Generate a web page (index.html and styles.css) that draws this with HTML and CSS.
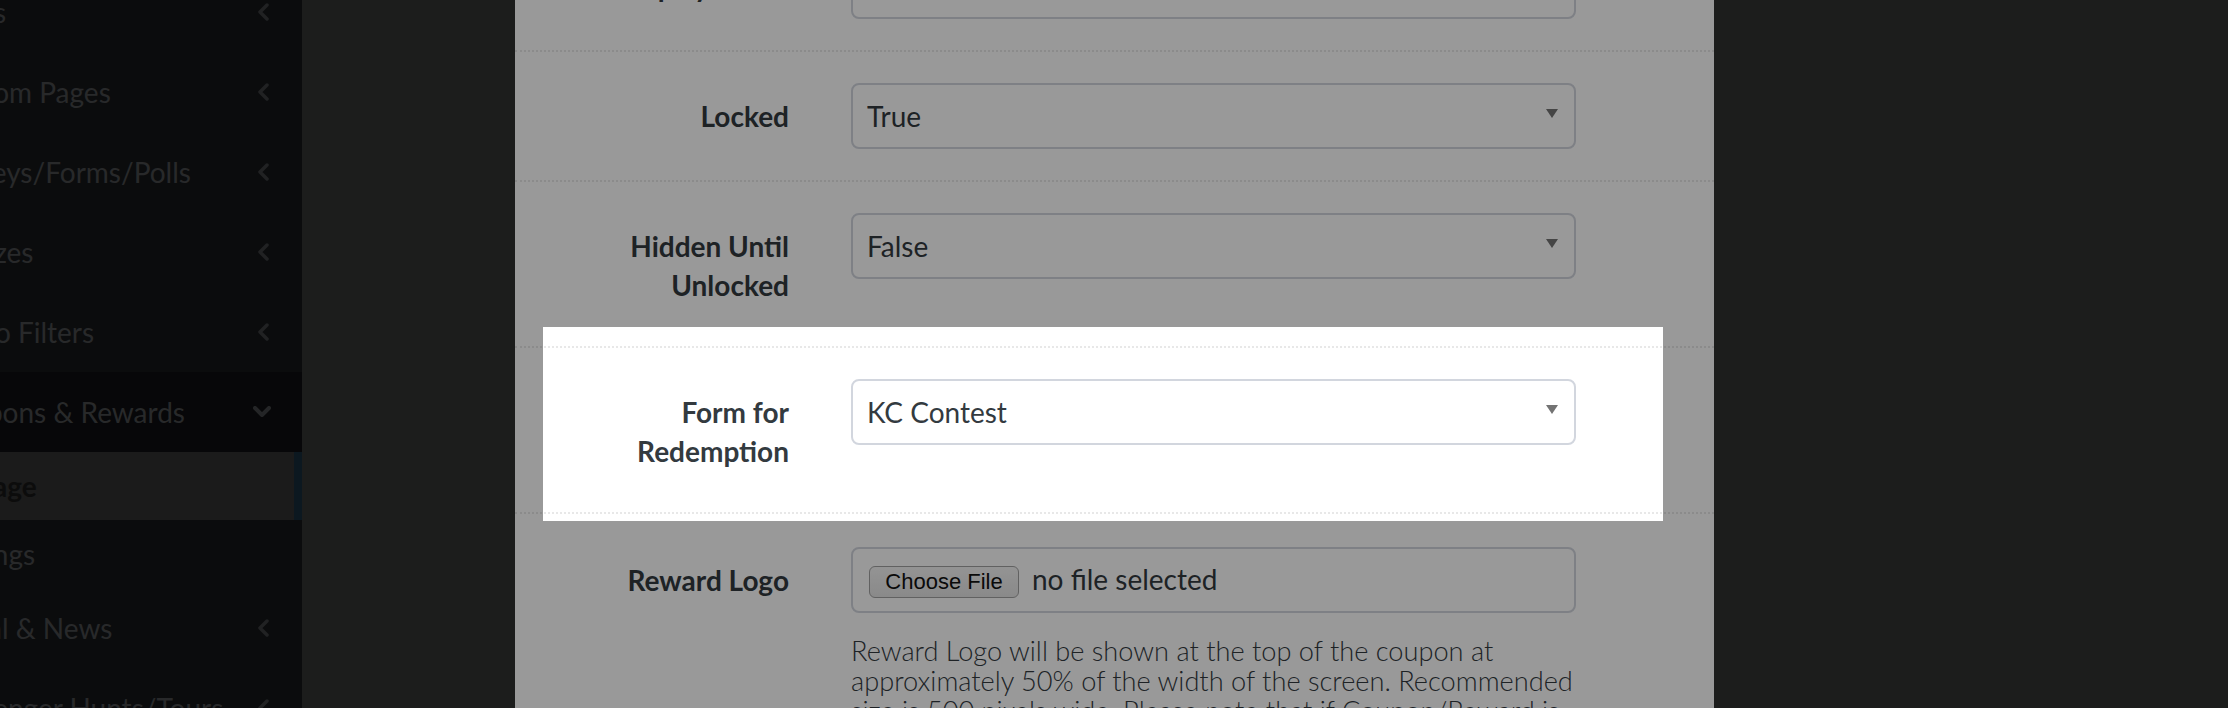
FILE: index.html
```html
<!DOCTYPE html>
<html>
<head>
<meta charset="utf-8">
<title>Coupon Settings</title>
<link rel="stylesheet" href="styles.css">
</head>
<body>
<div class="app">
  <aside class="sidebar">
    <ul class="menu">
      <li class="item"><span>Users</span><svg class="chev" viewBox="0 0 12 18" width="12" height="18"><polyline points="10,2 3,9 10,16"/></svg></li>
      <li class="item"><span>Custom Pages</span><svg class="chev" viewBox="0 0 12 18" width="12" height="18"><polyline points="10,2 3,9 10,16"/></svg></li>
      <li class="item"><span>Surveys/Forms/Polls</span><svg class="chev" viewBox="0 0 12 18" width="12" height="18"><polyline points="10,2 3,9 10,16"/></svg></li>
      <li class="item"><span>Quizzes</span><svg class="chev" viewBox="0 0 12 18" width="12" height="18"><polyline points="10,2 3,9 10,16"/></svg></li>
      <li class="item"><span>Photo Filters</span><svg class="chev" viewBox="0 0 12 18" width="12" height="18"><polyline points="10,2 3,9 10,16"/></svg></li>
      <li class="item open"><span>Coupons &amp; Rewards</span><svg class="chev-down" viewBox="0 0 18 12" width="18" height="12"><polyline points="2,2 9,9 16,2"/></svg></li>
      <li class="sub active"><span>Manage</span></li>
      <li class="sub"><span>Settings</span></li>
      <li class="item"><span>Social &amp; News</span><svg class="chev" viewBox="0 0 12 18" width="12" height="18"><polyline points="10,2 3,9 10,16"/></svg></li>
      <li class="item"><span>Scavenger Hunts/Tours</span><svg class="chev" viewBox="0 0 12 18" width="12" height="18"><polyline points="10,2 3,9 10,16"/></svg></li>
    </ul>
  </aside>
  <main class="page"></main>
</div>

<div class="modal">
  <div class="modal-body">
    <div class="row">
      <div class="label">Display Order</div>
      <div class="select">1</div>
    </div>
    <div class="row">
      <div class="label">Locked</div>
      <div class="select">True</div>
    </div>
    <div class="row">
      <div class="label">Hidden Until Unlocked</div>
      <div class="select">False</div>
    </div>
    <div class="row">
      <div class="label">Form for Redemption</div>
      <div class="select">KC Contest</div>
    </div>
    <div class="row row-file">
      <div class="label">Reward Logo</div>
      <div class="field">
        <div class="file-box">
          <button class="file-btn" type="button">Choose File</button>
          <span class="file-name">no file selected</span>
        </div>
        <p class="help">Reward Logo will be shown at the top of the coupon at approximately 50% of the width of the screen. Recommended size is 500 pixels wide. Please note that if Coupon/Reward is</p>
      </div>
    </div>
  </div>
</div>

<div class="spotlight"></div>
</body>
</html>
```

FILE: styles.css
```css
html, body {
  margin: 0;
  padding: 0;
}

body {
  width: 2228px;
  height: 708px;
  overflow: hidden;
  position: relative;
  background: #2f312f;
  font-family: Lato, "Liberation Sans", sans-serif;
}

.app {
  display: flex;
  height: 708px;
}

.sidebar {
  flex: none;
  width: 302px;
  height: 708px;
  background: #131517;
  overflow: hidden;
}

.page {
  flex: 1;
  background: #2f312f;
}

.menu {
  list-style: none;
  margin: -28px 0 0 -63px;
  padding: 0;
}

.item,
.sub {
  display: flex;
  align-items: center;
  justify-content: space-between;
  font-size: 28px;
  color: #434547;
  white-space: nowrap;
}

.item {
  height: 80px;
  padding-right: 33px;
}

.item.open {
  background: #0c0d0f;
  padding-right: 31px;
}

.sub {
  height: 68px;
}

.sub.active {
  background: #2d2d2d;
  color: #141414;
  font-weight: 700;
  border-right: 8px solid #142836;
}

.chev polyline,
.chev-down polyline {
  fill: none;
  stroke-width: 3.5;
  stroke-linecap: round;
  stroke-linejoin: round;
}

.chev polyline {
  stroke: #37393b;
}

.chev-down polyline {
  stroke: #3d3f41;
  stroke-width: 4;
}

/* modal */
.modal {
  position: absolute;
  top: 0;
  left: 515px;
  width: 1199px;
  height: 708px;
  background: #ffffff;
  overflow: hidden;
}

.modal-body {
  margin-top: -78px;
}

.row {
  display: grid;
  grid-template-columns: 274px 725px;
  column-gap: 62px;
  align-items: start;
  padding: 31px 0;
  border-bottom: 2px dotted #e8e8e8;
}

.row-file {
  padding-top: 33px;
}

.label {
  padding: 14px 0 10px 74px;
  text-align: right;
  font-size: 28px;
  font-weight: 700;
  line-height: 39px;
  color: #333a3f;
}

.select {
  box-sizing: border-box;
  height: 66px;
  display: flex;
  align-items: center;
  padding: 0 16px 0 14px;
  border: 2px solid #d2d6de;
  border-radius: 8px;
  font-size: 28px;
  color: #333a3f;
}

.select::after {
  content: "";
  margin-left: auto;
  margin-bottom: 5px;
  border-left: 6px solid transparent;
  border-right: 6px solid transparent;
  border-top: 9px solid #737373;
}

.file-box {
  box-sizing: border-box;
  height: 66px;
  display: flex;
  align-items: center;
  padding: 4px 0 0 16px;
  border: 2px solid #d2d6de;
  border-radius: 8px;
}

.file-btn {
  box-sizing: border-box;
  width: 150px;
  height: 32px;
  margin: 0;
  padding: 0;
  border: 1px solid #a2a2a2;
  border-radius: 6px;
  background: linear-gradient(#f6f6f6, #e6e6e6);
  font-family: "Liberation Sans", Arial, sans-serif;
  font-size: 22px;
  color: #111;
}

.file-name {
  margin-left: 13px;
  margin-top: -6px;
  font-size: 28px;
  color: #333a3f;
}

.help {
  margin: 23px 0 0;
  font-size: 27.2px;
  font-weight: 300;
  line-height: 30px;
  color: #333a3f;
}

/* tour spotlight: transparent hole, everything else dimmed */
.spotlight {
  position: absolute;
  left: 543px;
  top: 327px;
  width: 1120px;
  height: 194px;
  box-shadow: 0 0 0 3000px rgba(0, 0, 0, 0.4);
  pointer-events: none;
}
```
